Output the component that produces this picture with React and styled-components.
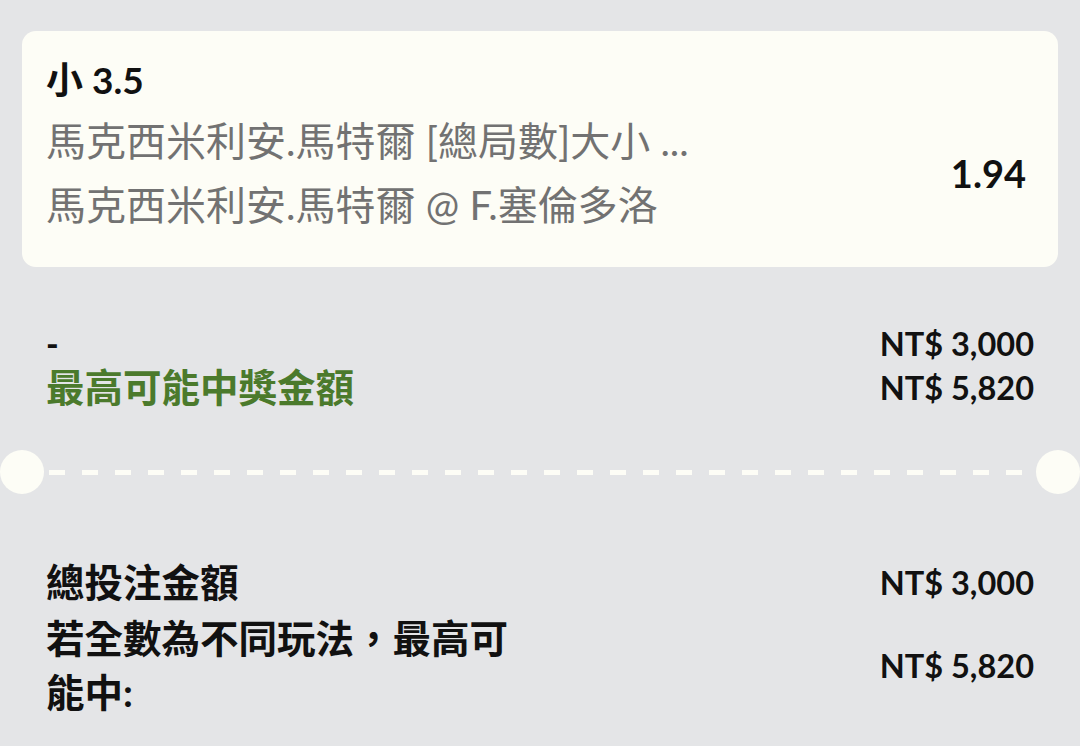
import styled, { createGlobalStyle } from "styled-components";

const GlobalStyle = createGlobalStyle`
	html, body {
		margin: 0;
		padding: 0;
		background: #e4e5e7;
	}
	body {
		font-family: "Lato", "Noto Sans CJK TC", sans-serif;
		color: #111;
	}
`
const Page = styled.div`
	width: 1080px;
	min-height: 746px;
	padding-top: 31px;
	box-sizing: border-box;
	background: #e4e5e7;
	overflow: hidden;
`
const Card = styled.div`
	margin: 0 22px;
	padding: 22px 32px 35px 24px;
	background: #fdfdf6;
	border-radius: 14px;
`
const Title = styled.div`
	font-size: 37px;
	font-weight: 700;
	line-height: 54px;
	color: #111;
`
const CardBody = styled.div`
	display: flex;
	align-items: center;
	justify-content: space-between;
`
const Lines = styled.div`
	display: flex;
	flex-direction: column;
`
const GrayLine = styled.div`
	margin-top: ${props => props.gap}px;
	font-size: 40px;
	line-height: 54px;
	color: #727272;
	white-space: nowrap;
`
const Odds = styled.div`
	font-size: 38px;
	font-weight: 700;
	color: #111;
	margin-top: 6px;
`
const Section = styled.div`
	padding: 0 46px;
	margin-top: ${props => props.top}px;
	display: flex;
	flex-direction: column;
	gap: ${props => props.gap || 0}px;
`
const Row = styled.div`
	display: flex;
	align-items: center;
	justify-content: space-between;
`
const Label = styled.div`
	max-width: 480px;
	font-size: 38.5px;
	font-weight: 700;
	line-height: ${props => props.lh || 54}px;
	color: ${props => props.green ? "#4b7a2c" : "#111"};
`
const Dash = styled.div`
	font-size: 34px;
	font-weight: 900;
	line-height: 44px;
`
const Amount = styled.div`
	font-size: 32.5px;
	font-weight: 700;
	white-space: nowrap;
	color: #111;
`
const Divider = styled.div`
	margin-top: 41px;
	display: flex;
	align-items: center;
`
const Notch = styled.span`
	width: 44px;
	height: 44px;
	border-radius: 50%;
	background: #fdfdf6;
	flex-shrink: 0;
`
const DashLine = styled.span`
	flex: 1;
	height: 5px;
	margin: 0 5px;
	background: repeating-linear-gradient(to right, #fdfdf6 0 16px, transparent 16px 33px);
`

export default function App() {
	return (
		<Page>
			<GlobalStyle />
			<Card>
				<Title>小 3.5</Title>
				<CardBody>
					<Lines>
						<GrayLine gap={7}>馬克西米利安.馬特爾 [總局數]大小 ...</GrayLine>
						<GrayLine gap={10}>馬克西米利安.馬特爾 @ F.塞倫多洛</GrayLine>
					</Lines>
					<Odds>1.94</Odds>
				</CardBody>
			</Card>
			<Section top={54}>
				<Row>
					<Dash>-</Dash>
					<Amount>NT$ 3,000</Amount>
				</Row>
				<Row>
					<Label green lh={44}>最高可能中獎金額</Label>
					<Amount>NT$ 5,820</Amount>
				</Row>
			</Section>
			<Divider>
				<Notch />
				<DashLine />
				<Notch />
			</Divider>
			<Section top={61} gap={2}>
				<Row>
					<Label>總投注金額</Label>
					<Amount>NT$ 3,000</Amount>
				</Row>
				<Row>
					<Label>若全數為不同玩法，最高可能中:</Label>
					<Amount>NT$ 5,820</Amount>
				</Row>
			</Section>
		</Page>
	);
}
